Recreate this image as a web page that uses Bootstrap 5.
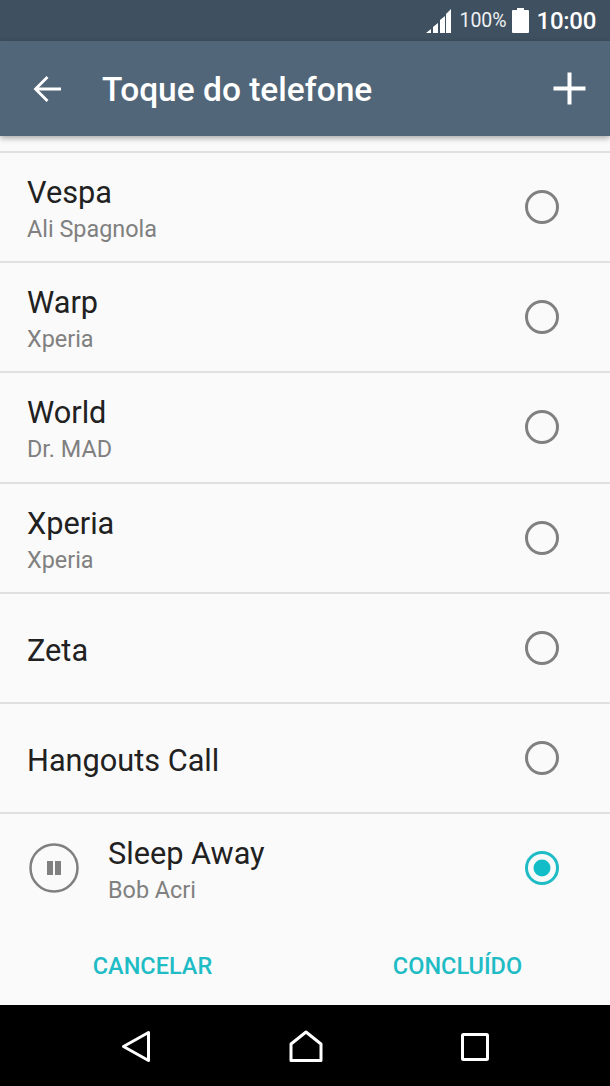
<!DOCTYPE html>
<html lang="en">
<head>
  <meta charset="UTF-8">
  <title>Toque do telefone</title>
  <link href="https://cdn.jsdelivr.net/npm/bootstrap@5.3.2/dist/css/bootstrap.min.css" rel="stylesheet" />
  <style>
    html, body { height: 1086px; overflow: hidden; }
    body { font-family: Roboto, sans-serif; background: #fafafa; }
    .phone { width: 610px; height: 1086px; }
    .status-bar { height: 41px; background: #3f5060; color: #fff; padding-right: 14px; }
    .status-pct { font-size: 19.5px; margin-left: 8px; margin-right: 5px; color: #eef1f3; }
    .status-time { font-size: 24px; font-weight: 500; margin-left: 8px; letter-spacing: -.3px; }
    .app-bar { height: 95px; background: #526679; color: #fff; box-shadow: 0 2px 6px rgba(0,0,0,.35); position: relative; z-index: 2; padding: 0 24px 0 33px; }
    .app-title { font-size: 33.5px; font-weight: 500; margin-left: 40px; line-height: 1; padding-top: 3px; }
    .tone-list { padding-top: 15px; }
    .tone-row { height: 110.2px; border-top: 2px solid #e0e0e0; padding: 0 50px 0 27px; }
    .tone-text { padding-top: 5px; }
    .tone-text.single { padding-top: 6px; }
    .tone-name { font-size: 30.7px; color: #212121; line-height: 36px; }
    .tone-sub { font-size: 23.4px; color: #808080; line-height: 30px; margin-top: 3px; }
    .pause-icon { margin: 0 29px 0 2px; }
    .actions { height: 82.6px; padding-top: 7px; }
    .act-link { font-size: 23.5px; font-weight: 500; color: #1fbcc6; text-decoration: none; }
    .act-slot { width: 305px; text-align: center; }
    .nav-keys { height: 81px; background: #000; padding-left: 121px; padding-top: 3px; }
    .nav-keys svg { display: block; }
    .nav-home { margin-left: 138px; margin-right: 138px; }
  </style>
</head>
<body>
<div class="phone d-flex flex-column">
  <!-- status bar -->
  <div class="status-bar d-flex align-items-center justify-content-end">
    <svg width="26" height="26" viewBox="0 0 26 26">
      <path fill="#fff" d="M1 25l5-4v4zM8 25v-6l5-4v10zM15 25V12l5-4v17zM21 25V6l5-5v24z"/>
    </svg>
    <span class="status-pct">100%</span>
    <svg width="17" height="25" viewBox="0 0 17 25">
      <path fill="#fff" d="M5 0h7v2h4a1 1 0 0 1 1 1v21a1 1 0 0 1-1 1H1a1 1 0 0 1-1-1V3a1 1 0 0 1 1-1h4z"/>
    </svg>
    <span class="status-time">10:00</span>
  </div>

  <!-- app bar -->
  <div class="app-bar d-flex align-items-center">
    <svg width="29" height="28" viewBox="0 0 29 28">
      <path fill="none" stroke="#fff" stroke-width="2.8" d="M28 14H3M14.500 2 2.500 14l12 12"/>
    </svg>
    <span class="app-title flex-grow-1">Toque do telefone</span>
    <svg width="33" height="33" viewBox="0 0 33 33">
      <path fill="none" stroke="#fff" stroke-width="4" d="M16.500 0.500v32M0.500 16.500h32"/>
    </svg>
  </div>

  <!-- tone list -->
  <div class="tone-list">
    <div class="tone-row d-flex align-items-center">
      <div class="tone-text flex-grow-1"><div class="tone-name">Vespa</div><div class="tone-sub">Ali Spagnola</div></div>
      <svg width="36" height="36" viewBox="0 0 36 36"><circle cx="18" cy="18" r="15.500" fill="none" stroke="#808080" stroke-width="3"/></svg>
    </div>
    <div class="tone-row d-flex align-items-center">
      <div class="tone-text flex-grow-1"><div class="tone-name">Warp</div><div class="tone-sub">Xperia</div></div>
      <svg width="36" height="36" viewBox="0 0 36 36"><circle cx="18" cy="18" r="15.500" fill="none" stroke="#808080" stroke-width="3"/></svg>
    </div>
    <div class="tone-row d-flex align-items-center">
      <div class="tone-text flex-grow-1"><div class="tone-name">World</div><div class="tone-sub">Dr. MAD</div></div>
      <svg width="36" height="36" viewBox="0 0 36 36"><circle cx="18" cy="18" r="15.500" fill="none" stroke="#808080" stroke-width="3"/></svg>
    </div>
    <div class="tone-row d-flex align-items-center">
      <div class="tone-text flex-grow-1"><div class="tone-name">Xperia</div><div class="tone-sub">Xperia</div></div>
      <svg width="36" height="36" viewBox="0 0 36 36"><circle cx="18" cy="18" r="15.500" fill="none" stroke="#808080" stroke-width="3"/></svg>
    </div>
    <div class="tone-row d-flex align-items-center">
      <div class="tone-text single flex-grow-1"><div class="tone-name">Zeta</div></div>
      <svg width="36" height="36" viewBox="0 0 36 36"><circle cx="18" cy="18" r="15.500" fill="none" stroke="#808080" stroke-width="3"/></svg>
    </div>
    <div class="tone-row d-flex align-items-center">
      <div class="tone-text single flex-grow-1"><div class="tone-name">Hangouts Call</div></div>
      <svg width="36" height="36" viewBox="0 0 36 36"><circle cx="18" cy="18" r="15.500" fill="none" stroke="#808080" stroke-width="3"/></svg>
    </div>
    <div class="tone-row d-flex align-items-center">
      <svg class="pause-icon" width="50" height="50" viewBox="0 0 50 50">
        <circle cx="25" cy="25" r="23.500" fill="none" stroke="#808080" stroke-width="2.500"/>
        <path fill="#808080" d="M18 18h6v14h-6zM26 18h6v14h-6z"/>
      </svg>
      <div class="tone-text flex-grow-1"><div class="tone-name">Sleep Away</div><div class="tone-sub">Bob Acri</div></div>
      <svg width="36" height="36" viewBox="0 0 36 36">
        <circle cx="18" cy="18" r="15.500" fill="none" stroke="#1fbcc6" stroke-width="3"/>
        <circle cx="18" cy="18" r="8.500" fill="#12bdc7"/>
      </svg>
    </div>
  </div>

  <!-- dialog actions -->
  <div class="actions d-flex align-items-center">
    <div class="act-slot"><a class="act-link" href="#">CANCELAR</a></div>
    <div class="act-slot"><a class="act-link" href="#">CONCLUÍDO</a></div>
  </div>

  <!-- nav keys -->
  <div class="nav-keys d-flex align-items-center">
    <svg width="30" height="33" viewBox="0 0 30 33"><path fill="none" stroke="#fff" stroke-width="3" stroke-linejoin="round" d="M27.500 2.500v28L2.500 16.500z"/></svg>
    <svg class="nav-home" width="34" height="33" viewBox="0 0 34 33"><path fill="none" stroke="#fff" stroke-width="3" stroke-linejoin="round" d="M2 30.500V14L17 2l15 12v16.500z"/></svg>
    <svg width="28" height="28" viewBox="0 0 28 28"><rect x="1.500" y="1.500" width="25" height="25" rx="1" fill="none" stroke="#fff" stroke-width="3"/></svg>
  </div>
</div>
<script src="https://cdn.jsdelivr.net/npm/bootstrap@5.3.2/dist/js/bootstrap.bundle.min.js"></script>
</body>
</html>
